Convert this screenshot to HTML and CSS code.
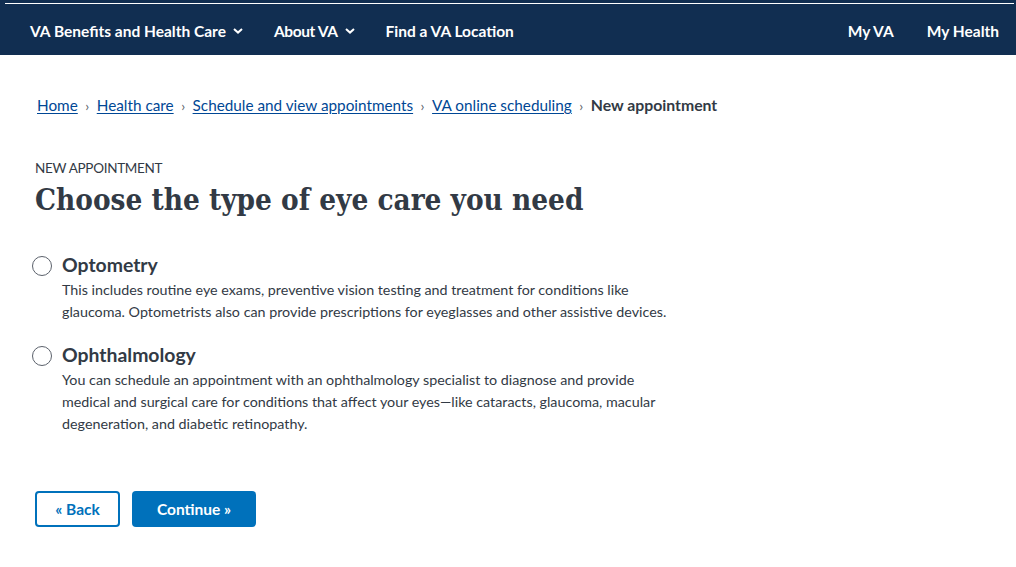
FILE: index.html
```html
<!DOCTYPE html>
<html lang="en">
<head>
<meta charset="utf-8">
<title>Choose the type of eye care you need</title>
<link rel="stylesheet" href="styles.css">
</head>
<body>
<header class="header">
  <div class="header-line"></div>
  <nav class="nav">
    <ul class="nav-left">
      <li class="nav-item">VA Benefits and Health Care
        <svg class="chev" viewBox="0 0 10 6" width="10" height="6"><path d="M1 1 L5 4.6 L9 1" fill="none" stroke="#fff" stroke-width="2"/></svg>
      </li>
      <li class="nav-item nav-about">About VA
        <svg class="chev" viewBox="0 0 10 6" width="10" height="6"><path d="M1 1 L5 4.6 L9 1" fill="none" stroke="#fff" stroke-width="2"/></svg>
      </li>
      <li class="nav-item">Find a VA Location</li>
    </ul>
    <ul class="nav-right">
      <li class="nav-item">My VA</li>
      <li class="nav-item">My Health</li>
    </ul>
  </nav>
</header>
<main class="main">
  <ol class="breadcrumbs">
    <li><a href="#">Home</a></li>
    <li class="sep">›</li>
    <li><a href="#">Health care</a></li>
    <li class="sep">›</li>
    <li><a href="#">Schedule and view appointments</a></li>
    <li class="sep">›</li>
    <li><a href="#">VA online scheduling</a></li>
    <li class="sep">›</li>
    <li class="current">New appointment</li>
  </ol>
  <p class="eyebrow">NEW APPOINTMENT</p>
  <h1 class="title">Choose the type of eye care you need</h1>
  <div class="options">
    <label class="option">
      <span class="radio"></span>
      <span class="option-body">
        <span class="option-label">Optometry</span>
        <span class="option-desc">This includes routine eye exams, preventive vision testing and treatment for conditions like glaucoma. Optometrists also can provide prescriptions for eyeglasses and other assistive devices.</span>
      </span>
    </label>
    <label class="option">
      <span class="radio"></span>
      <span class="option-body">
        <span class="option-label">Ophthalmology</span>
        <span class="option-desc">You can schedule an appointment with an ophthalmology specialist to diagnose and provide medical and surgical care for conditions that affect your eyes—like cataracts, glaucoma, macular degeneration, and diabetic retinopathy.</span>
      </span>
    </label>
  </div>
  <div class="actions">
    <button class="btn btn-outline">« Back</button>
    <button class="btn btn-primary">Continue »</button>
  </div>
</main>
</body>
</html>
```

FILE: styles.css
```css
* { box-sizing: border-box; }
body {
  margin: 0;
  font-family: "Lato", "Noto Sans", sans-serif;
  color: #323a45;
  background: #fff;
}
.header {
  background: #112e51;
  height: 55px;
  padding-top: 3px;
}
.header-line {
  height: 1px;
  margin: 0 2px 0 5px;
  background: #fff;
}
.nav {
  display: flex;
  justify-content: space-between;
  align-items: center;
  height: 53px;
  padding: 0 17px 0 30px;
}
.nav ul {
  list-style: none;
  margin: 0;
  padding: 0;
  display: flex;
  align-items: center;
}
.nav-left { gap: 31px; }
.nav-right { gap: 33px; }
.nav-item {
  color: #fff;
  font-weight: 700;
  font-size: 15.5px;
  display: flex;
  align-items: center;
  gap: 7px;
}
.nav-about { letter-spacing: -0.4px; }
.chev { display: block; margin-top: 1px; }
.main {
  padding: 0 35px;
}
.breadcrumbs {
  list-style: none;
  margin: 0;
  padding: 40px 0 0 2px;
  display: flex;
  align-items: baseline;
  gap: 7.5px;
  font-size: 15.3px;
  line-height: 20px;
}
.breadcrumbs a {
  color: #004795;
  text-decoration: underline;
  text-underline-offset: 2px;
}
.breadcrumbs .sep { color: #5b616b; font-size: 14px; }
.breadcrumbs .current { font-weight: 700; font-size: 15.8px; }
.eyebrow {
  margin: 43px 0 0;
  font-size: 13.5px;
  letter-spacing: -0.3px;
  line-height: 18px;
}
.title {
  margin: 4px 0 0;
  font-family: "DejaVu Serif", "Liberation Serif", serif;
  font-stretch: condensed;
  font-size: 29.4px;
  line-height: 38px;
  font-weight: 700;
}
.options {
  margin-top: 34px;
  display: flex;
  flex-direction: column;
  gap: 20px;
}
.option {
  display: flex;
  gap: 10px;
  align-items: flex-start;
}
.radio {
  width: 20px;
  height: 20px;
  border: 1px solid #5b616b;
  border-radius: 50%;
  margin: 3px 0 0 -3px;
  flex: none;
  background: #fff;
}
.option-body { display: flex; flex-direction: column; width: 612px; }
.option-label {
  font-weight: 700;
  font-size: 19.4px;
  line-height: 24px;
}
.option-desc {
  font-size: 14.3px;
  line-height: 22px;
  margin-top: 2px;
}
.actions {
  margin-top: 56px;
  display: flex;
  gap: 12px;
}
.btn {
  height: 36px;
  border-radius: 4px;
  font-family: inherit;
  font-size: 15.5px;
  font-weight: 700;
  cursor: pointer;
}
.btn-outline {
  width: 85px;
  background: #fff;
  color: #0071bb;
  border: 2px solid #0071bb;
}
.btn-primary {
  width: 124px;
  background: #0071bb;
  color: #fff;
  border: none;
}
```
